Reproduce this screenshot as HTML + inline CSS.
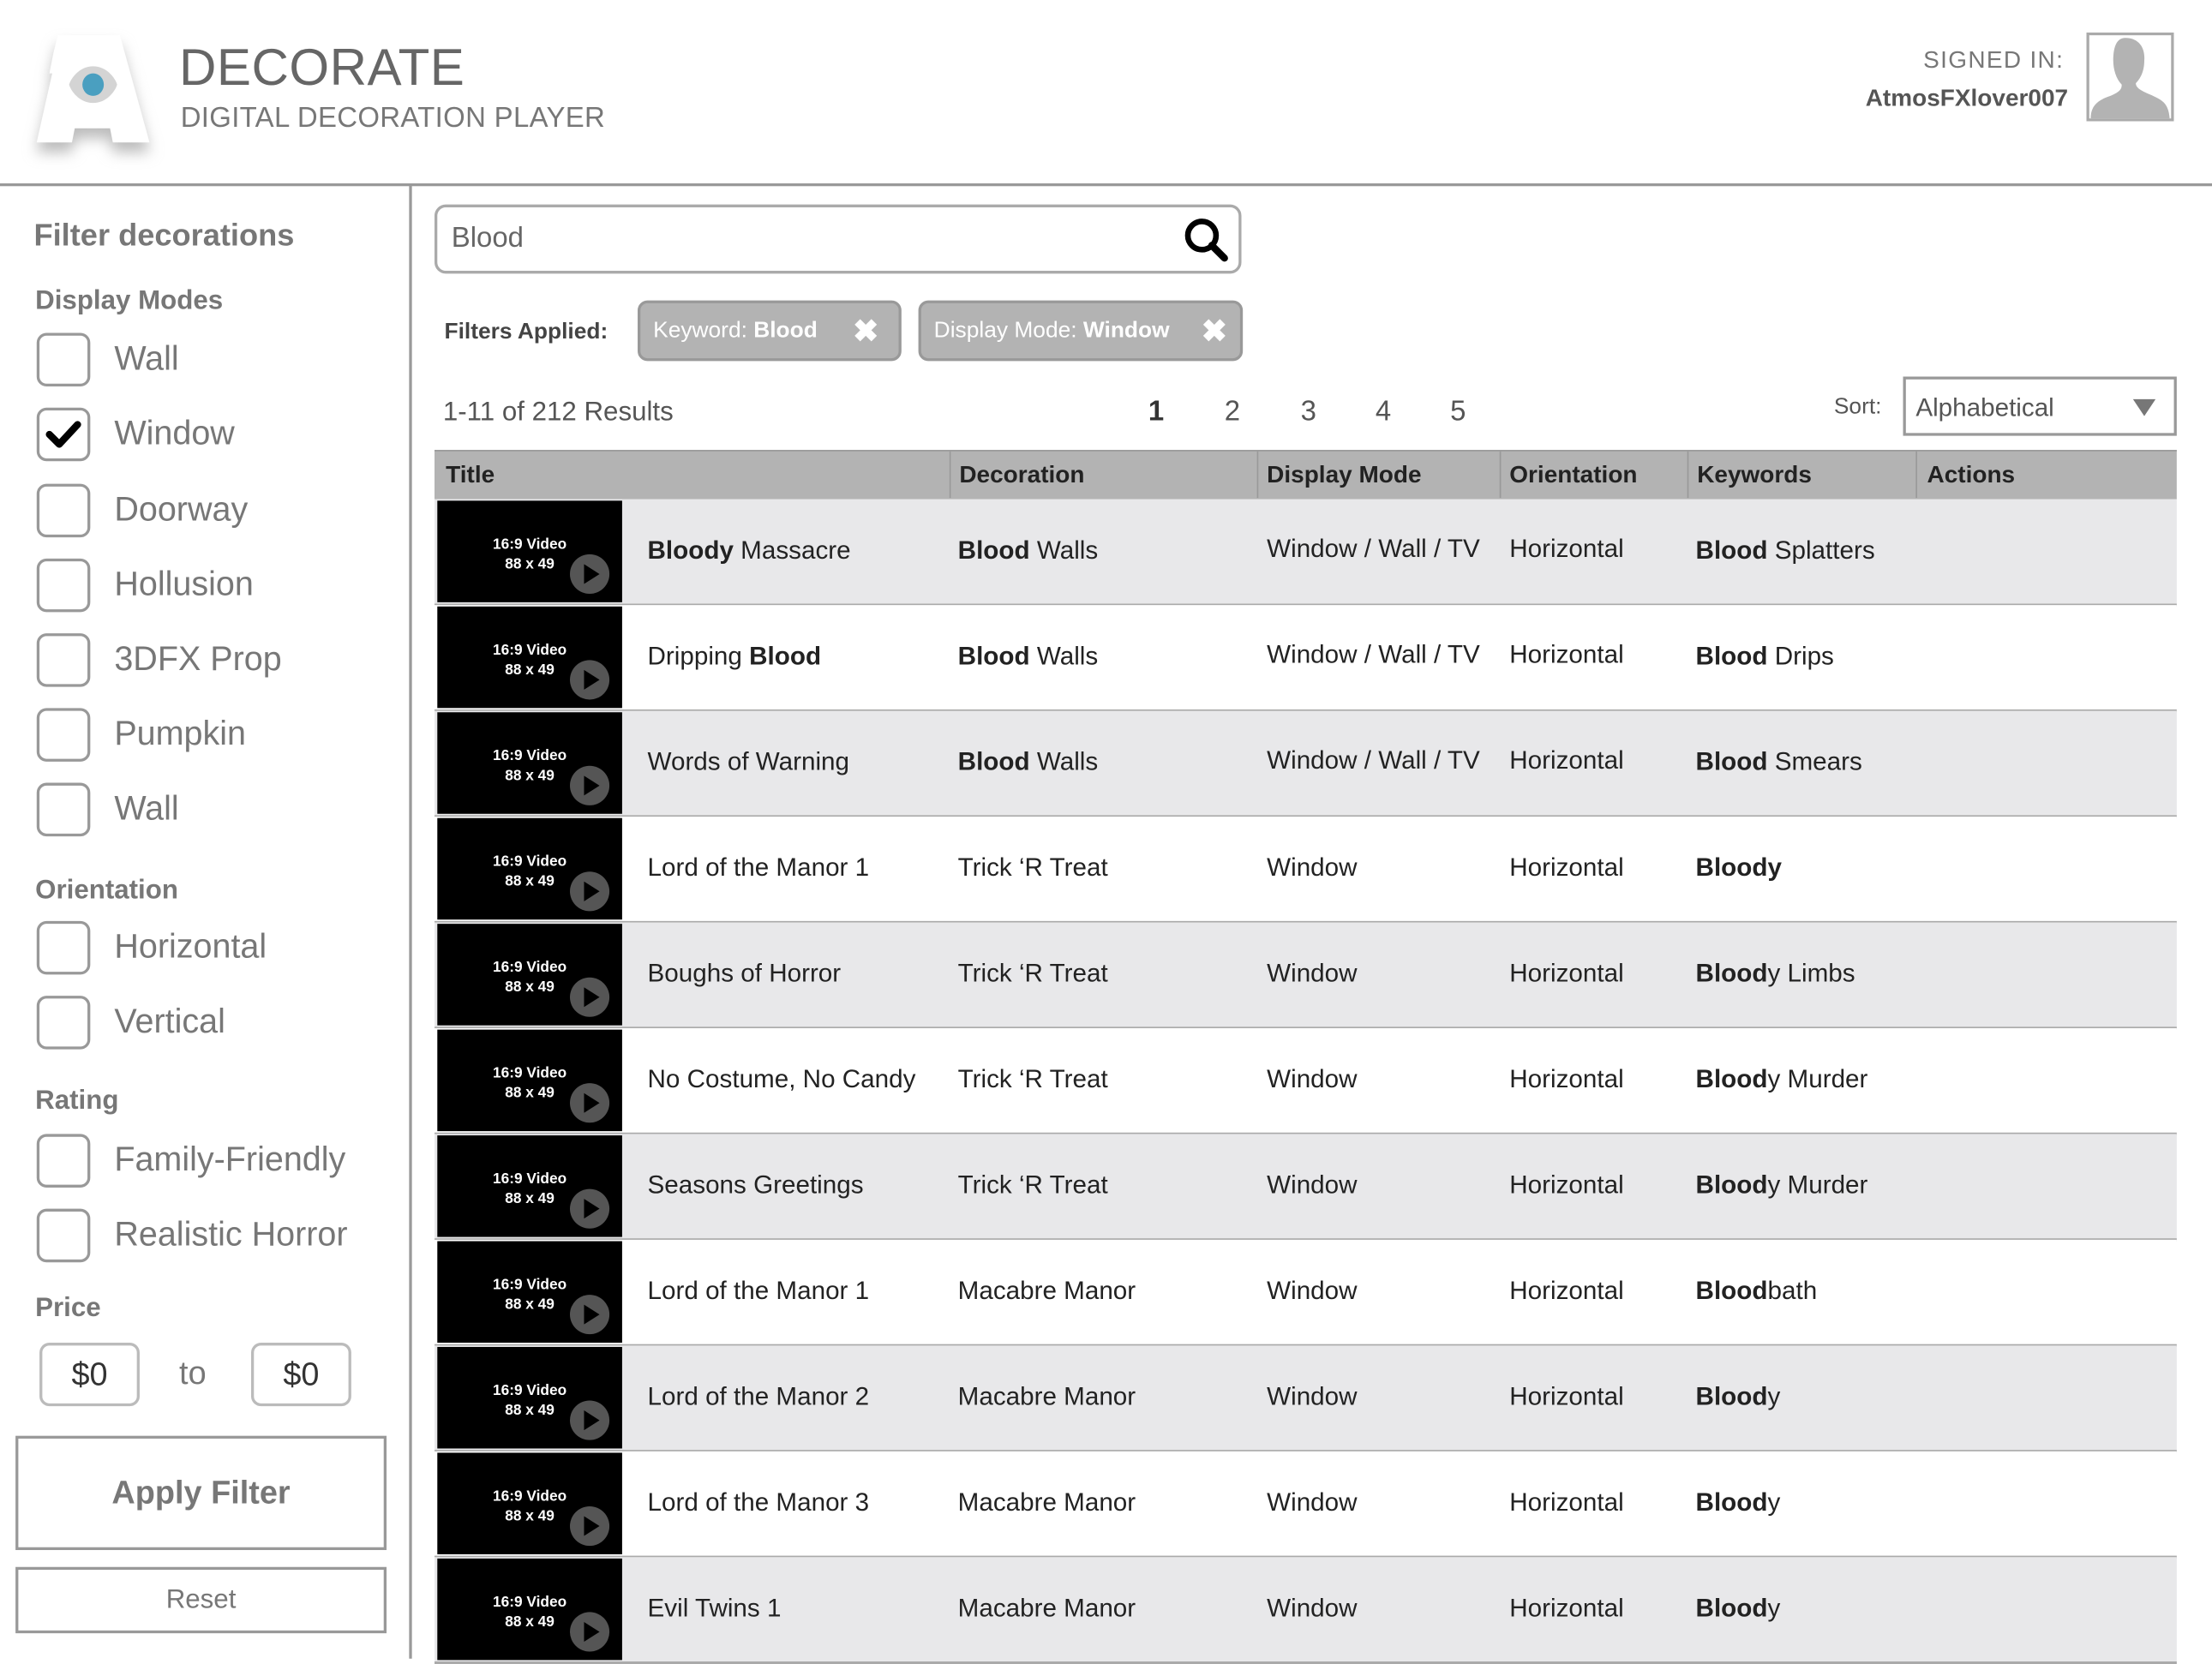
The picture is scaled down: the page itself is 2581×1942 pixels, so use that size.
<!DOCTYPE html>
<html><head><meta charset="utf-8">
<style>
html,body{margin:0;padding:0;background:#fff;width:2581px;height:1935px;overflow:hidden}
#w{position:absolute;left:0;top:0;width:1568px;height:1176px;transform:scale(1.64605);transform-origin:0 0;font-family:"Liberation Sans",sans-serif}
.a{position:absolute;white-space:nowrap}
.cb{position:absolute;left:26px;width:34px;height:34px;border:2px solid #999;border-radius:7px;box-sizing:content-box}
.lb{position:absolute;left:81px;font-size:24px;color:#777}
.h{position:absolute;left:25px;font-size:19px;font-weight:bold;color:#777}
.row{position:absolute;left:308px;width:1235px;height:74px;border-bottom:2px solid #aaa}
.row .th{position:absolute;left:2px;top:1px;width:131px;height:72px;background:#000}
.th .t{position:absolute;left:0;width:131px;text-align:center;color:#fff;font-weight:bold;font-size:10.5px;line-height:14px;top:24px}
.th .p{position:absolute;left:94px;top:38px;width:28px;height:28px;border-radius:50%;background:#555}
.th .p:after{content:"";position:absolute;left:10px;top:7px;border-left:11px solid #000;border-top:7px solid transparent;border-bottom:7px solid transparent}
.row .c{position:absolute;top:26px;font-size:18px;color:#222}
.hd{position:absolute;top:327px;font-size:17px;font-weight:bold;color:#222}
.vl{position:absolute;top:320px;width:1px;height:33px;background:#999}
</style></head><body><div id="w">
<!-- header -->
<svg class="a" style="left:0;top:0" width="130" height="130" viewBox="0 0 130 130">
<defs><filter id="sh" x="-30%" y="-30%" width="160%" height="160%"><feGaussianBlur stdDeviation="5"/></filter></defs>
<path d="M41 25 H85 L106 101 H80 L78 91 H53 L51 101 H26 L37 52 H35 L38 37 Z" fill="#bbb" filter="url(#sh)" transform="translate(0,7)"/>
<path d="M41 25 H85 L106 101 H80 L78 91 H53 L51 101 H26 L37 52 H35 L38 37 Z" fill="#fff"/>
<path d="M66 47 C76 47 82 56 83 60 C82 64 76 73 66 73 C56 73 50 64 49 60 C50 56 56 47 66 47Z" fill="#d4d4d4"/>
<ellipse cx="66" cy="60" rx="7.6" ry="8" fill="#4a9fc0"/>
</svg>
<div class="a" style="left:127px;top:27px;font-size:36.5px;color:#666;letter-spacing:0.3px">DECORATE</div>
<div class="a" style="left:128px;top:73px;font-size:20px;color:#777;letter-spacing:0.2px">DIGITAL DECORATION PLAYER</div>
<div class="a" style="right:105px;top:33px;font-size:17px;color:#777;letter-spacing:0.8px">SIGNED IN:</div>
<div class="a" style="right:102px;top:60px;font-size:17px;color:#555;font-weight:bold">AtmosFXlover007</div>
<svg class="a" style="left:1479px;top:23px" width="62" height="63" viewBox="0 0 62 63"><rect x="1" y="1" width="60" height="61" fill="#fff" stroke="#aaa" stroke-width="2"/><path d="M26 4 C34 3 42 8 41 20 C41 28 38 33 35 36 C35 39 38 41 45 44 C54 48 58 50 59 61 H3 C3 52 8 48 17 45 C24 42 25 40 25 37 C21 33 19 26 19 20 C19 11 21 5 26 4Z" fill="#b3b3b3"/></svg>
<div class="a" style="left:0;top:130px;width:1568px;height:2px;background:#999"></div>
<div class="a" style="left:290px;top:131px;width:2px;height:1045px;background:#999"></div>
<!-- sidebar -->
<div class="a" style="left:24px;top:154px;font-size:22px;font-weight:bold;color:#777">Filter decorations</div>
<div class="h" style="top:203px">Display Modes</div>
<div class="cb" style="top:236px"></div><div class="lb" style="top:241px">Wall</div>
<div class="cb" style="top:289px"></div><div class="lb" style="top:294px">Window</div>
<svg class="a" style="left:32px;top:296px" width="26" height="24" viewBox="0 0 26 24"><path d="M3 12 L10 19 L23 5" fill="none" stroke="#000" stroke-width="5" stroke-linejoin="round" stroke-linecap="round"/></svg>
<div class="cb" style="top:343px"></div><div class="lb" style="top:348px">Doorway</div>
<div class="cb" style="top:396px"></div><div class="lb" style="top:401px">Hollusion</div>
<div class="cb" style="top:449px"></div><div class="lb" style="top:454px">3DFX Prop</div>
<div class="cb" style="top:502px"></div><div class="lb" style="top:507px">Pumpkin</div>
<div class="cb" style="top:555px"></div><div class="lb" style="top:560px">Wall</div>
<div class="h" style="top:621px">Orientation</div>
<div class="cb" style="top:653px"></div><div class="lb" style="top:658px">Horizontal</div>
<div class="cb" style="top:706px"></div><div class="lb" style="top:711px">Vertical</div>
<div class="h" style="top:770px">Rating</div>
<div class="cb" style="top:804px"></div><div class="lb" style="top:809px">Family-Friendly</div>
<div class="cb" style="top:857px"></div><div class="lb" style="top:862px">Realistic Horror</div>
<div class="h" style="top:917px">Price</div>
<div class="a" style="left:28px;top:952px;width:67px;height:41px;border:2px solid #bbb;border-radius:7px;text-align:center;font-size:23px;line-height:41px;color:#333">$0</div>
<div class="a" style="left:127px;top:960px;font-size:23px;color:#777">to</div>
<div class="a" style="left:178px;top:952px;width:67px;height:41px;border:2px solid #bbb;border-radius:7px;text-align:center;font-size:23px;line-height:41px;color:#333">$0</div>
<div class="a" style="left:11px;top:1018px;width:259px;height:77px;border:2px solid #999;text-align:center;line-height:77px;font-size:23px;font-weight:bold;color:#777">Apply Filter</div>
<div class="a" style="left:11px;top:1111px;width:259px;height:43px;border:2px solid #999;text-align:center;line-height:43px;font-size:19px;color:#777">Reset</div>
<!-- search -->
<div class="a" style="left:308px;top:145px;width:568px;height:45px;border:2px solid #aaa;border-radius:8px"></div>
<div class="a" style="left:320px;top:158px;font-size:20px;color:#666">Blood</div>
<svg class="a" style="left:838px;top:153px" width="34" height="34" viewBox="0 0 34 34"><circle cx="14" cy="14" r="10" fill="none" stroke="#000" stroke-width="4"/><path d="M21 21 L30 30" stroke="#000" stroke-width="5" stroke-linecap="round"/></svg>
<div class="a" style="left:315px;top:227px;font-size:16px;font-weight:bold;color:#444">Filters Applied:</div>
<div class="a" style="left:452px;top:213px;height:39px;background:#b3b3b3;border:2px solid #999;border-radius:7px;color:#fff;font-size:16px;line-height:39px;padding-left:9px;width:174px">Keyword: <b>Blood</b><span style="position:absolute;right:14px;font-size:22px;font-weight:bold">✖</span></div>
<div class="a" style="left:651px;top:213px;height:39px;width:217px;background:#b3b3b3;border:2px solid #999;border-radius:7px;color:#fff;font-size:16px;line-height:39px;padding-left:9px">Display Mode: <b>Window</b><span style="position:absolute;right:9px;font-size:22px;font-weight:bold">✖</span></div>
<div class="a" style="left:314px;top:282px;font-size:19px;color:#555">1-11 of 212 Results</div>
<div class="a" style="left:814px;top:281px;font-size:20px;color:#333;font-weight:bold">1</div>
<div class="a" style="left:868px;top:281px;font-size:20px;color:#555">2</div>
<div class="a" style="left:922px;top:281px;font-size:20px;color:#555">3</div>
<div class="a" style="left:975px;top:281px;font-size:20px;color:#555">4</div>
<div class="a" style="left:1028px;top:281px;font-size:20px;color:#555">5</div>
<div class="a" style="left:1300px;top:280px;font-size:16px;color:#555">Sort:</div>
<div class="a" style="left:1349px;top:267px;width:190px;height:38px;border:2px solid #999"></div>
<div class="a" style="left:1358px;top:279px;font-size:18px;color:#555">Alphabetical</div>
<div class="a" style="left:1512px;top:283px;border-top:12px solid #777;border-left:8px solid transparent;border-right:8px solid transparent"></div>
<!-- table header -->
<div class="a" style="left:308px;top:319px;width:1235px;height:34px;background:#b3b3b3;border-top:1px solid #999"></div>
<div class="vl" style="left:673px"></div><div class="vl" style="left:891px"></div><div class="vl" style="left:1063px"></div><div class="vl" style="left:1196px"></div><div class="vl" style="left:1358px"></div>
<div class="hd" style="left:316px">Title</div>
<div class="hd" style="left:680px">Decoration</div>
<div class="hd" style="left:898px">Display Mode</div>
<div class="hd" style="left:1070px">Orientation</div>
<div class="hd" style="left:1203px">Keywords</div>
<div class="hd" style="left:1366px">Actions</div>
<div class="row" style="top:354px;background:#e8e8ea"><div class="th"><div class="t">16:9 Video<br>88 x 49</div><div class="p"></div></div><div class="c" style="left:151px"><b>Bloody</b> Massacre</div><div class="c" style="left:371px"><b>Blood</b> Walls</div><div class="c" style="left:590px;top:25px">Window / Wall / TV</div><div class="c" style="left:762px;top:25px">Horizontal</div><div class="c" style="left:894px"><b>Blood</b> Splatters</div></div>
<div class="row" style="top:429px;background:#fff"><div class="th"><div class="t">16:9 Video<br>88 x 49</div><div class="p"></div></div><div class="c" style="left:151px">Dripping <b>Blood</b></div><div class="c" style="left:371px"><b>Blood</b> Walls</div><div class="c" style="left:590px;top:25px">Window / Wall / TV</div><div class="c" style="left:762px;top:25px">Horizontal</div><div class="c" style="left:894px"><b>Blood</b> Drips</div></div>
<div class="row" style="top:504px;background:#e8e8ea"><div class="th"><div class="t">16:9 Video<br>88 x 49</div><div class="p"></div></div><div class="c" style="left:151px">Words of Warning</div><div class="c" style="left:371px"><b>Blood</b> Walls</div><div class="c" style="left:590px;top:25px">Window / Wall / TV</div><div class="c" style="left:762px;top:25px">Horizontal</div><div class="c" style="left:894px"><b>Blood</b> Smears</div></div>
<div class="row" style="top:579px;background:#fff"><div class="th"><div class="t">16:9 Video<br>88 x 49</div><div class="p"></div></div><div class="c" style="left:151px">Lord of the Manor 1</div><div class="c" style="left:371px">Trick ‘R Treat</div><div class="c" style="left:590px">Window</div><div class="c" style="left:762px">Horizontal</div><div class="c" style="left:894px"><b>Bloody</b></div></div>
<div class="row" style="top:654px;background:#e8e8ea"><div class="th"><div class="t">16:9 Video<br>88 x 49</div><div class="p"></div></div><div class="c" style="left:151px">Boughs of Horror</div><div class="c" style="left:371px">Trick ‘R Treat</div><div class="c" style="left:590px">Window</div><div class="c" style="left:762px">Horizontal</div><div class="c" style="left:894px"><b>Blood</b>y Limbs</div></div>
<div class="row" style="top:729px;background:#fff"><div class="th"><div class="t">16:9 Video<br>88 x 49</div><div class="p"></div></div><div class="c" style="left:151px">No Costume, No Candy</div><div class="c" style="left:371px">Trick ‘R Treat</div><div class="c" style="left:590px">Window</div><div class="c" style="left:762px">Horizontal</div><div class="c" style="left:894px"><b>Blood</b>y Murder</div></div>
<div class="row" style="top:804px;background:#e8e8ea"><div class="th"><div class="t">16:9 Video<br>88 x 49</div><div class="p"></div></div><div class="c" style="left:151px">Seasons Greetings</div><div class="c" style="left:371px">Trick ‘R Treat</div><div class="c" style="left:590px">Window</div><div class="c" style="left:762px">Horizontal</div><div class="c" style="left:894px"><b>Blood</b>y Murder</div></div>
<div class="row" style="top:879px;background:#fff"><div class="th"><div class="t">16:9 Video<br>88 x 49</div><div class="p"></div></div><div class="c" style="left:151px">Lord of the Manor 1</div><div class="c" style="left:371px">Macabre Manor</div><div class="c" style="left:590px">Window</div><div class="c" style="left:762px">Horizontal</div><div class="c" style="left:894px"><b>Blood</b>bath</div></div>
<div class="row" style="top:954px;background:#e8e8ea"><div class="th"><div class="t">16:9 Video<br>88 x 49</div><div class="p"></div></div><div class="c" style="left:151px">Lord of the Manor 2</div><div class="c" style="left:371px">Macabre Manor</div><div class="c" style="left:590px">Window</div><div class="c" style="left:762px">Horizontal</div><div class="c" style="left:894px"><b>Blood</b>y</div></div>
<div class="row" style="top:1029px;background:#fff"><div class="th"><div class="t">16:9 Video<br>88 x 49</div><div class="p"></div></div><div class="c" style="left:151px">Lord of the Manor 3</div><div class="c" style="left:371px">Macabre Manor</div><div class="c" style="left:590px">Window</div><div class="c" style="left:762px">Horizontal</div><div class="c" style="left:894px"><b>Blood</b>y</div></div>
<div class="row" style="top:1104px;background:#e8e8ea"><div class="th"><div class="t">16:9 Video<br>88 x 49</div><div class="p"></div></div><div class="c" style="left:151px">Evil Twins 1</div><div class="c" style="left:371px">Macabre Manor</div><div class="c" style="left:590px">Window</div><div class="c" style="left:762px">Horizontal</div><div class="c" style="left:894px"><b>Blood</b>y</div></div>
</div></body></html>
